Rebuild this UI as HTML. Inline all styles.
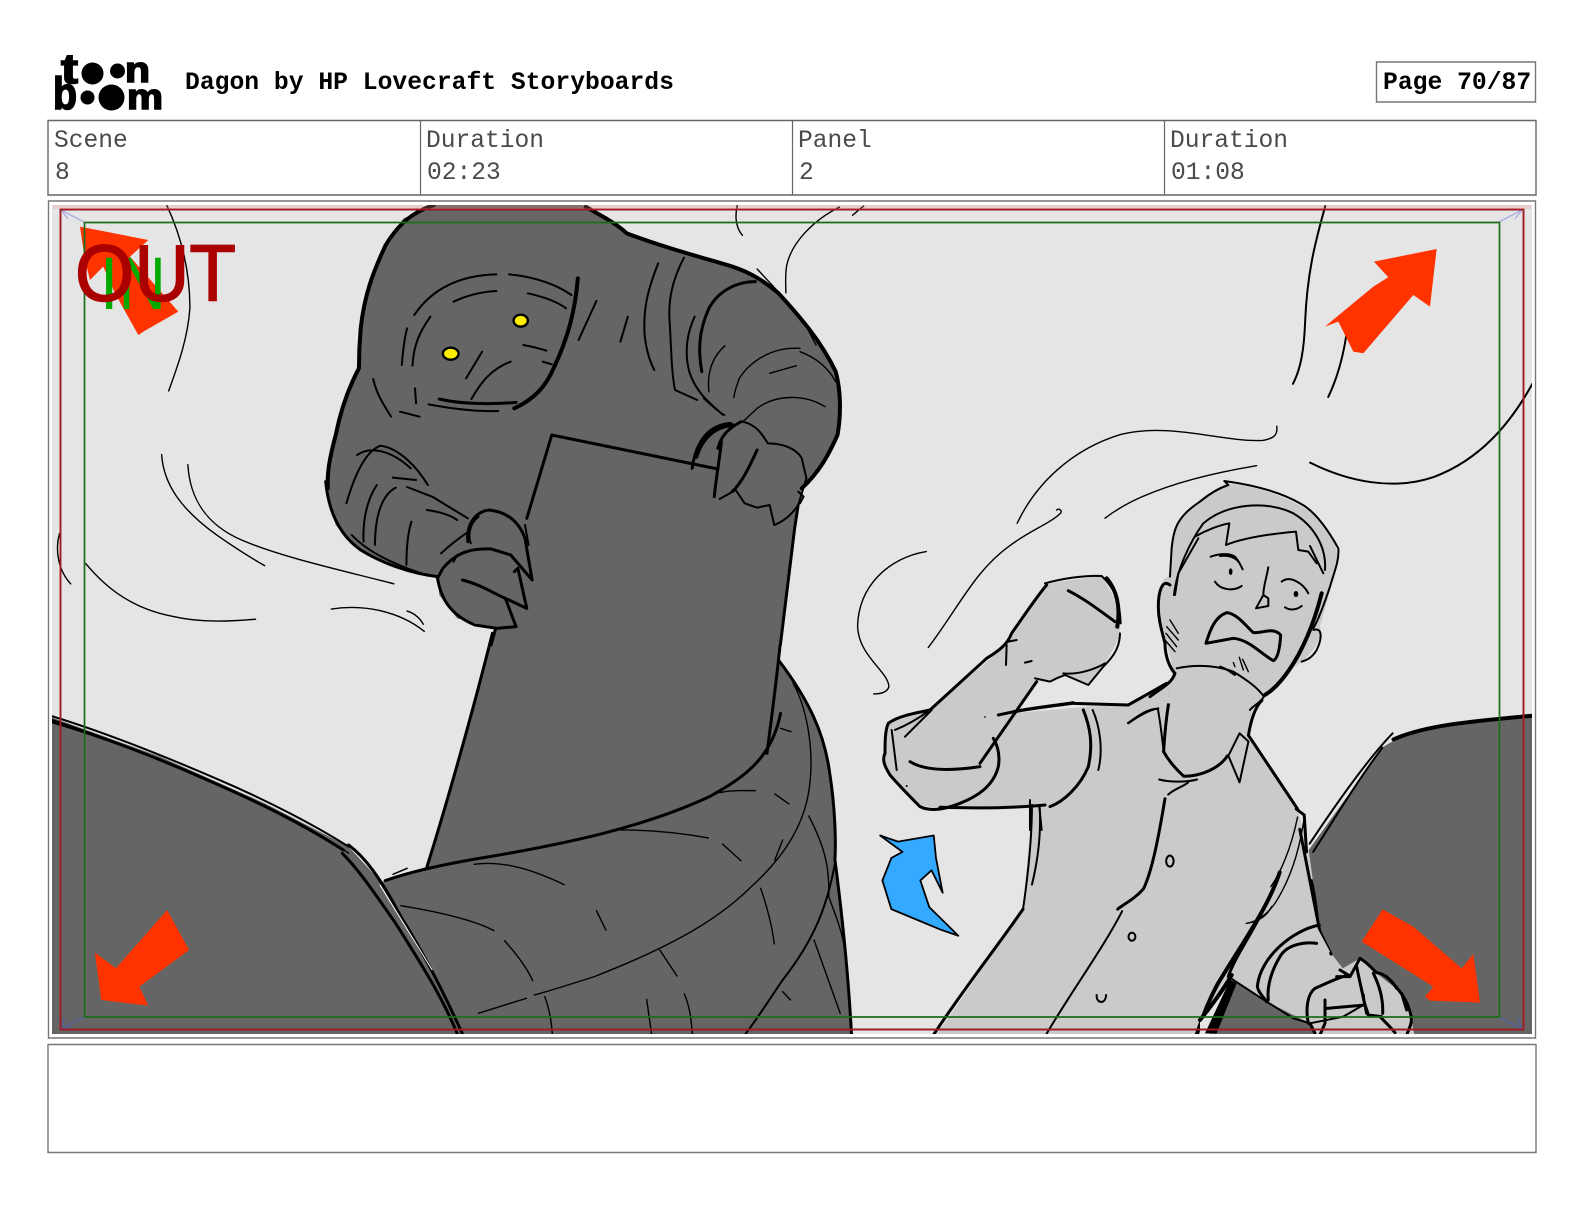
<!DOCTYPE html>
<html><head><meta charset="utf-8"><style>
html,body{margin:0;padding:0;background:#fff}
body{width:1584px;height:1224px;overflow:hidden;position:relative}
svg{position:absolute;left:0;top:0}
svg *{vector-effect:non-scaling-stroke}
.l{fill:none;stroke:#000;stroke-linecap:round;stroke-linejoin:round;stroke-width:2}
.t{stroke-width:1.4}.b{stroke-width:3}.x{stroke-width:4}
.d{fill:#656565}.m{fill:#cacaca}.r{fill:#ff3300}
text{font-family:"Liberation Mono",monospace}
.h{font-weight:bold;font-size:24.7px;fill:#000}
.c{font-size:24.6px;fill:#4a4a4a}
.g{font-family:"Liberation Sans",sans-serif;font-weight:bold;fill:#000;stroke:#000;stroke-width:1.6px}
</style></head><body>
<svg width="1584" height="1224" viewBox="0 0 1584 1224" xmlns="http://www.w3.org/2000/svg">
<rect width="1584" height="1224" fill="#fff"/>
<!-- logo -->
<g fill="#000">
<text class="g" x="61" y="83" font-size="42" textLength="17" lengthAdjust="spacingAndGlyphs" style="font-family:'Liberation Sans',sans-serif">t</text>
<circle cx="92.500" cy="73.500" r="11"/><circle cx="117.500" cy="71" r="7.500"/>
<text class="g" x="125" y="82" font-size="36" textLength="25" lengthAdjust="spacingAndGlyphs" style="font-family:'Liberation Sans',sans-serif">n</text>
<text class="g" x="53" y="109" font-size="45" textLength="24" lengthAdjust="spacingAndGlyphs" style="font-family:'Liberation Sans',sans-serif">b</text>
<circle cx="87.500" cy="97.500" r="7"/><circle cx="111.500" cy="97.500" r="13"/>
<text class="g" x="127" y="109" font-size="36" textLength="36" lengthAdjust="spacingAndGlyphs" style="font-family:'Liberation Sans',sans-serif">m</text>
</g>
<text class="h" x="185" y="89">Dagon by HP Lovecraft Storyboards</text>
<rect x="1376.500" y="62" width="159" height="40" fill="#fff" stroke="#777" stroke-width="1.400"/>
<text class="h" x="1383" y="89">Page 70/87</text>
<!-- table -->
<rect x="48" y="120.500" width="1488" height="74.500" fill="#fff" stroke="#666" stroke-width="1.400"/>
<path d="M420.500 120.500V195M792.500 120.500V195M1164.500 120.500V195" stroke="#666" stroke-width="1.200"/>
<text class="c" x="54" y="147">Scene</text><text class="c" x="55" y="179">8</text>
<text class="c" x="426" y="147">Duration</text><text class="c" x="427" y="179">02:23</text>
<text class="c" x="798" y="147">Panel</text><text class="c" x="799" y="179">2</text>
<text class="c" x="1170" y="147">Duration</text><text class="c" x="1171" y="179">01:08</text>
<!-- panel -->
<rect x="48.500" y="201" width="1487" height="837" fill="#fff" stroke="#777" stroke-width="1.400"/>
<rect x="48" y="1044.500" width="1488" height="108" fill="#fff" stroke="#777" stroke-width="1.400"/>
<clipPath id="c"><rect x="52" y="205" width="1480" height="829"/></clipPath>
<g clip-path="url(#c)">
<rect x="52" y="205" width="1480" height="829" fill="#e5e5e5"/>

<!-- background wisps (main view coords) -->
<g transform="scale(1.0101)">
<path class="l t" d="M165 203C180 235 188 270 188 305C186 335 176 362 167 387"/>
<path class="l t" d="M160 450C162 480 180 505 215 530C232 542 248 552 262 560"/>
<path class="l t" d="M186 460C188 495 205 520 240 535C280 552 340 565 390 578"/>
<path class="l t" d="M85 558C105 582 130 602 170 610C200 617 230 615 253 613"/>
<path class="l t" d="M328 603C360 598 395 605 420 625M403 605C410 607 416 612 419 618"/>
<path class="l t" d="M59 528C54 545 58 565 70 578"/>
<path class="l t" d="M730 203C727 215 729 226 735 233"/>
<path class="l t" d="M831 205C805 218 784 240 779 262C777 272 778 282 778 290M855 204L844 213"/>
<path class="l" d="M1312 204C1302 240 1294 270 1292 320C1291 345 1288 365 1280 380"/>
<path class="l" d="M1335 315C1332 345 1325 372 1315 393"/>
<path class="l" d="M1517 380C1495 420 1465 455 1420 472C1380 486 1335 477 1297 458"/>
<path class="l t" d="M1007 518C1025 480 1060 445 1110 430C1160 418 1210 438 1250 436C1262 434 1265 430 1264 422"/>
<path class="l t" d="M1094 513C1130 485 1190 470 1244 461"/>
<path class="l t" d="M919 641C950 600 965 565 1000 540C1020 525 1040 518 1050 508C1052 505 1048 503 1046 505"/>
<path class="l t" d="M917 546C880 552 850 580 849 620C850 650 880 665 880 680C878 686 870 687 865 687"/>
</g>

<!-- left rock -->
<g transform="translate(40 640) scale(.523 .3333)">
<path class="d" d="M22 232L230 350L430 490L590 620L660 740L700 860L760 1000L825 1195H20Z"/>
<path class="d" d="M655 725L740 680L865 0H1415L1412 60C1470 180 1500 280 1510 400C1520 500 1522 600 1520 660C1530 780 1545 980 1552 1195H815L760 1000L700 860Z"/>
<path class="l" d="M22 228C130 280 240 350 340 418C440 485 530 560 590 620"/>
<path class="l b" d="M22 245C120 290 220 350 320 420C420 488 500 550 580 630" />
<path class="l t" d="M22 238C130 295 230 355 330 425C420 490 510 550 590 640"/>
<path class="l b" d="M590 615C620 650 650 710 690 830C730 930 770 1050 810 1190"/>
<path class="l b" d="M578 640C610 690 640 760 680 850C720 950 770 1070 800 1190"/>
<path d="M650 735L750 990" stroke="#fff" stroke-width="1" fill="none"/>
<path class="l b" d="M660 722C700 700 760 675 860 650C1000 612 1150 565 1280 470C1350 410 1400 350 1416 220"/>
<path class="l b" d="M740 680C780 480 830 200 865 -20"/>
<path class="l b" d="M1390 340C1400 220 1410 100 1416 0"/>
<path class="l b" d="M1412 60C1470 180 1500 280 1510 400C1520 500 1522 600 1520 660C1530 780 1545 980 1552 1195"/>
<path class="l t" d="M1440 130C1465 200 1480 320 1472 430C1465 540 1430 640 1360 740C1290 850 1190 930 1060 1010C1000 1040 960 1060 945 1065M930 1075L838 1120"/>
<path class="l" d="M1520 670C1505 800 1480 900 1420 1020C1390 1090 1370 1140 1345 1190"/>
<path class="l t" d="M690 797C760 815 830 840 868 872M888 902C910 940 930 980 942 1022M830 673C890 660 950 695 1002 734M1110 570C1170 570 1230 580 1278 594M1305 612L1340 662M1300 458C1320 450 1345 452 1368 452M1405 462L1432 492M1064 812L1082 870M1185 930L1218 1008M1378 745C1390 800 1400 860 1404 912M1470 528C1500 620 1510 680 1508 770M1480 900L1530 1120M1508 770C1530 860 1540 900 1545 1020M965 1070C975 1110 978 1150 980 1190M1160 1078L1170 1190M1232 1062C1245 1110 1245 1150 1248 1190M1420 1055L1435 1080M1416 265L1436 275M1420 600L1405 660M675 703L702 685"/>
</g>

<!-- right rock -->
<g transform="translate(840 400) scale(.4464 .40894)">
<path class="d" d="M1050 1100L1215 850C1280 800 1400 785 1560 772V1570H820L880 1400Z"/>
<path class="l x" d="M1240 830C1310 795 1420 785 1550 772"/>
<path class="l" d="M1238 815C1180 880 1110 990 1052 1085"/>
<path class="l" d="M1215 850C1160 930 1110 1020 1060 1105"/>
</g>

<!-- monster upper -->
<g transform="translate(300 195) scale(.35714 .33333)">
<path class="d" d="M375 30H790L860 65L915 115C1000 150 1100 180 1180 205C1250 225 1290 250 1340 295C1400 365 1460 440 1500 530C1515 590 1515 660 1505 720C1480 780 1455 830 1405 880L1395 930L1385 1000L1345 1350H535L545 1300L440 1270L390 1200L385 1145L250 1110L160 1060L100 990L75 880L90 750L120 620L165 520L165 450L190 270L240 140L290 70Z"/>
<path class="l x" d="M375 30C320 50 280 80 240 150C205 230 180 300 170 400C165 460 165 500 165 520C140 570 115 640 100 720C85 780 75 830 78 880"/>
<path class="l x" d="M800 35C830 55 880 80 915 115C1000 150 1100 180 1180 205C1250 225 1290 250 1340 295C1400 365 1460 440 1500 530C1515 590 1515 660 1505 720C1480 780 1455 830 1405 880"/>
<path class="l b" d="M1395 930L1385 1000L1345 1350"/>
<path class="l b" d="M548 1300L535 1350"/>
<path class="l b" d="M72 860C80 950 110 1020 170 1065C230 1105 310 1135 385 1145"/>
<path class="l" d="M320 360C370 280 450 240 550 238M585 238C660 245 720 270 760 300"/>
<path class="l" d="M430 320C470 300 510 290 550 288M638 295C680 305 720 320 745 340"/>
<path class="l x" d="M778 250C770 350 750 430 710 520C690 570 660 610 600 640"/>
<path class="l b" d="M390 612C440 625 520 630 605 622"/>
<path class="l" d="M360 628C420 640 490 650 555 648"/>
<path class="l" d="M365 365C335 410 318 450 315 512M300 400C292 430 288 470 285 510M625 450C650 455 670 460 690 467M680 500L705 508M510 470L465 550M590 500C540 520 510 555 480 612M830 318L780 435M918 365L897 440M205 552C215 600 235 630 255 665M322 580L325 625M280 650L335 665M1003 205C975 280 960 340 965 420C970 470 980 500 992 525M1075 188C1045 250 1030 310 1035 380C1040 470 1040 530 1050 585L1112 615M1105 365C1085 410 1075 470 1090 530C1105 580 1130 610 1185 660"/>
<path class="l b" d="M1275 260C1220 260 1170 290 1145 340C1115 410 1115 470 1125 530"/>
<path class="l t" d="M1280 222L1365 320M1190 452C1150 490 1140 540 1145 590M1130 610C1150 630 1170 650 1190 660M1400 460C1320 455 1260 500 1230 550C1220 580 1215 600 1215 608M1315 535L1390 512M1400 470C1450 490 1480 520 1500 560M1470 635C1410 595 1330 600 1280 640C1260 660 1250 670 1240 680M1425 410L1445 450"/>
<path class="l" d="M1240 680C1280 690 1295 720 1310 745C1350 745 1390 760 1405 790L1418 850L1395 930C1370 970 1340 985 1328 990L1315 930L1280 938L1245 925L1220 885L1175 912"/>
<path class="l b" d="M1180 740C1175 790 1165 850 1160 905M1280 765C1260 810 1240 860 1210 890M1235 680C1200 700 1180 720 1170 760M1205 685C1150 690 1110 730 1098 820"/>
<path class="l x" d="M1210 690C1160 695 1125 730 1110 785"/>
<path class="l b" d="M705 720L1170 822"/>
<path class="l b" d="M705 720L635 970"/>
<path class="l" d="M1395 890L1410 905L1400 925"/>
<path class="l" d="M130 925C150 850 180 770 225 752C280 760 330 820 358 870M160 780C200 750 260 770 310 820M260 848L325 855M300 876L370 905L470 970M355 945C390 950 420 960 440 975M215 870C190 910 175 970 178 1040M268 878C230 900 210 960 210 1050M312 980C300 1020 298 1070 298 1110M145 1020C180 1060 240 1100 340 1135"/>
<path class="l b" d="M470 1040C465 990 490 950 530 945C570 950 610 970 630 1030L650 1155L590 1080L535 1062C480 1060 440 1070 400 1120L385 1150C395 1210 420 1260 490 1290L550 1300L605 1295L575 1210L635 1240L610 1120L600 1130M455 1155C510 1170 550 1200 575 1210"/>
<path class="l" d="M500 965C475 985 470 1020 478 1045M395 1075C420 1050 445 1030 465 1015M430 1100L440 1080M630 990L640 1050"/>
<ellipse cx="618" cy="377" rx="20" ry="18" fill="#ffee00" stroke="#000" stroke-width="2.400"/>
<ellipse cx="422" cy="476" rx="22" ry="18" fill="#ffee00" stroke="#000" stroke-width="2.400"/>
</g>

<!-- man torso fill -->
<g transform="translate(840 400) scale(.4464 .40894)">
<path class="m" d="M430 990L640 745L740 690L748 650L945 730L925 760L915 820L1025 1000L1050 1100L1075 1300L1098 1350L1138 1406L1200 1420L1275 1490L1290 1570H1040L1050 1530L875 1420L815 1570H205L410 1245L430 1000Z"/>
</g>

<!-- arm -->
<g transform="translate(880 570) scale(.3333)">
<path class="m" d="M10 560L20 460L150 420L380 225L500 40L665 18L720 110L720 200L670 290L625 345L550 315L520 330L470 335L400 430L620 410L745 405L860 340L880 335V780H450V715H180L110 705L30 620Z"/>
<path class="l" d="M495 40C550 25 620 15 665 18C700 50 720 90 722 160M720 190C720 240 690 270 670 290L625 345L555 315L530 325L510 335L465 325"/>
<path class="l x" d="M680 25C710 60 722 110 712 170"/>
<path class="l b" d="M565 62C620 90 670 130 705 155"/>
<path class="l b" d="M500 45C470 80 430 140 395 190C385 215 370 235 320 265L150 420C100 430 50 440 25 460C15 480 15 520 15 550C5 570 15 590 30 615C60 650 90 680 120 710C150 725 190 720 240 700C290 680 340 650 355 590C360 560 355 530 340 505"/>
<path class="l b" d="M470 335L300 580"/>
<path class="l" d="M155 420L75 500M150 420C110 450 70 470 45 480M35 480L50 600M380 225L378 285M385 215L410 210M435 278L455 273"/>
<path class="l b" d="M90 575C130 600 200 605 300 590"/>
<path class="l b" d="M180 712C280 715 390 715 495 705"/>
<path class="l" d="M450 690V780M478 708L485 780"/>
<path class="l b" d="M355 435C420 420 500 410 580 400L745 405L860 340M400 425C480 410 540 405 580 398"/>
<path class="l b" d="M610 420C630 470 640 520 625 590C600 650 550 695 510 710"/>
<path class="l" d="M638 420C660 470 670 540 655 600"/>
<path class="l" d="M745 460C780 435 810 420 835 415M550 310C590 315 640 300 675 280"/>
<circle cx="315" cy="441" r="2.500"/><circle cx="80" cy="648" r="3"/>
</g>

<!-- man torso lines -->
<g transform="translate(840 400) scale(.4464 .40894)">
<path class="l b" d="M410 1245C350 1340 270 1450 205 1560"/>
<path class="l" d="M430 990C430 1080 420 1170 410 1245M447 990C452 1070 440 1140 430 1185"/>
<path class="l b" d="M728 975C715 1060 700 1150 680 1195C660 1220 640 1230 622 1245"/>
<path class="l" d="M632 1250C590 1340 510 1460 460 1555"/>
<path class="l x" d="M985 1155C960 1240 900 1330 845 1430C820 1480 810 1520 798 1555"/>
<path class="l t" d="M1040 1020C1030 1100 1010 1170 975 1230C955 1260 935 1275 910 1280M1025 1020C1010 1100 985 1160 965 1190"/>
<path class="l b" d="M915 820L1025 1000M1022 1000L1040 1015L1045 1105M1030 1050C1045 1130 1060 1220 1075 1300L1100 1355"/>
<path class="l" d="M870 870L895 935L915 835L895 815L870 870"/>
<path class="l b" d="M945 735C930 750 920 785 915 820"/>
<path class="l b" d="M725 860C735 880 750 900 770 920C810 920 850 900 868 870"/>
<path class="l b" d="M745 690C735 740 728 800 725 860"/>
<path class="l" d="M715 928C740 935 775 935 800 928M735 965C750 950 770 945 780 935"/>
<path class="l" d="M645 790C670 770 690 755 712 755C718 790 722 830 725 860"/>
<path class="l" d="M742 1115A8 13 0 1 0 736 1140A8 13 0 1 0 742 1115ZM656 1303A7 9 0 1 0 652 1322A7 9 0 1 0 656 1303ZM575 1455C573 1475 595 1480 596 1455"/>
</g>

<!-- head -->
<g transform="translate(1120 470) scale(.3333)">
<path class="m" d="M160 180C200 110 270 60 320 40C420 50 520 85 590 140C640 190 660 240 650 290L600 470C610 490 590 540 545 575L510 600L430 680L390 720L140 700L160 600L130 480C110 420 110 360 130 330L155 310Z"/>
<path class="l" d="M155 235C160 180 170 140 240 95C270 70 295 55 325 45L313 33C400 45 480 65 540 100C590 125 630 190 655 235C658 270 645 300 630 350C610 410 595 450 580 475"/>
<path class="l" d="M162 375C170 300 210 215 250 160C320 100 440 90 520 130C580 165 620 230 615 300"/>
<path class="l" d="M225 200C260 180 300 165 328 160L318 225C380 200 470 190 528 185L535 240L565 245L590 280"/>
<path class="l" d="M155 235L150 320M235 205L175 310L165 375M570 228L610 310"/>
<path class="l b" d="M150 345C125 325 115 370 115 410C115 450 125 480 135 520C135 560 150 595 165 610C155 640 130 650 90 680"/>
<path class="l t" d="M150 450L175 490M140 470L175 510M138 490L170 530M135 510L165 545"/>
<path class="l" d="M580 480C610 470 605 510 590 540C575 565 560 570 545 575"/>
<path class="l x" d="M605 370C590 430 565 500 535 555C510 600 475 650 435 675"/>
<path class="l" d="M170 595C240 580 300 590 340 605C380 630 410 650 432 680M300 590C320 595 335 610 345 615"/>
<path class="l" d="M432 680C420 700 395 710 390 720"/>
<path class="l" d="M272 260C300 250 330 250 345 260C355 270 362 285 368 298M300 258C325 255 345 262 355 275"/>
<ellipse cx="332" cy="305" rx="5.500" ry="10" fill="#000"/>
<ellipse cx="528" cy="372" rx="7" ry="9" fill="#000"/>
<path class="l" d="M285 335C300 360 340 365 365 348"/>
<path class="l" d="M485 335C510 315 550 340 565 370"/>
<path class="l" d="M495 412C510 422 530 420 545 408"/>
<path class="l" d="M445 292C438 330 430 350 430 375L408 415L445 408L445 385L430 375"/>
<path class="l b" d="M258 520C270 480 285 440 320 428C350 430 380 470 400 488C430 490 460 470 482 495C480 530 475 565 460 572C420 550 390 510 340 505Z"/>
<path class="l t" d="M340 578L345 590M358 562L370 600M368 568L385 605"/>
</g>

<!-- hand -->
<g transform="translate(1200 880) scale(.3333)">
<path class="m" d="M330 320L420 270L480 235L530 280L600 335L640 420L610 460H580L520 410L370 420L345 460L330 440Z"/>
<path class="m" d="M90 295L175 120L350 140L390 215L330 320L330 430L200 365Z"/>
<path class="d" d="M90 295L200 365L330 430L345 462H60Z" />
<path d="M60 340L90 295L20 462H0V420Z" fill="#e5e5e5"/>
<path d="M90 300L110 310L50 460H15Z" fill="#000"/>
<path class="l b" d="M358 135C280 150 180 230 172 320C175 335 185 345 200 365"/>
<path class="l b" d="M350 190C310 185 260 195 240 230C215 270 200 320 205 360"/>
<path class="l" d="M85 290L200 365L280 415L330 430L430 410L490 375"/>
<path class="l b" d="M325 430C315 380 325 340 345 325C380 310 420 290 445 285L420 270M380 385L495 375M375 360V430L362 460M470 260C480 310 490 350 500 400M520 280C540 320 550 360 548 400M560 290C590 320 615 350 625 380C640 420 635 430 622 460M605 340L620 390M505 405L545 410M330 430L345 460"/>
<path class="l b" d="M410 290L450 290L480 235C505 250 520 270 530 278C550 280 575 300 590 325M490 345C490 370 500 385 505 405M540 410C560 430 575 445 585 458"/>
<path class="l x" d="M95 285C70 330 40 370 0 420"/>
<path class="l t" d="M140 130C175 125 200 110 215 80"/>
<path class="l b" d="M190 90C150 170 100 240 85 290"/>
<path class="l" d="M355 130C350 80 345 40 335 0"/>
</g>

<!-- blue arrow + red arrows -->
<g transform="translate(840 400) scale(.4464 .40894)">
<path d="M90 1065L130 1080L210 1065L215 1120L230 1205L205 1150L180 1175L200 1240L265 1310L225 1295L115 1245L95 1175L115 1120L140 1105Z" fill="#33aaff" stroke="#000" stroke-width="1.800" stroke-linejoin="round"/>
</g>
<g transform="translate(1200 50) scale(.3333)"><path class="r" d="M375 830L405 805L520 710L565 682L522 635L710 597L690 770L640 735L490 910L460 905L415 815Z"/></g>
<g transform="translate(1200 880) scale(.3333)"><path class="r" d="M548 88L640 140L785 265L820 222L840 368L690 362L675 350L700 320L485 185Z"/></g>
<g transform="translate(40 640) scale(.523 .3333)"><path class="r" d="M243 810L285 930L190 1040L207 1097L117 1080L105 938L145 985Z"/></g>
<g transform="translate(40 40) scale(.3333)"><path class="r" d="M120 560L325 600L270 650L415 815L310 875L295 885L225 760L190 680L150 720L135 660Z"/></g>

<!-- corner arrows and frames -->
<g fill="none" stroke="#aab0e4" stroke-width="1.300">
<path d="M84 222L61 210M61 210L72 210M61 210L68 219"/>
<path d="M1499 222L1522 210M1522 210L1511 210M1522 210L1515 219"/>
<path d="M84 1017L61 1029M61 1029L64 1018M61 1029L72 1028" stroke="#55609c"/>
<path d="M1499 1017L1522 1029M1522 1029L1511 1029M1522 1029L1518 1018" stroke="#55609c"/>
</g>
<rect x="84.500" y="222.500" width="1415" height="794.500" fill="none" stroke="#1a6e1a" stroke-width="1.700"/>
<rect x="60.500" y="209.500" width="1463" height="820" fill="none" stroke="#a01c24" stroke-width="1.900"/>
<rect x="52" y="205" width="1480" height="4" fill="#f09090" opacity=".25"/>
<text x="100" y="309" font-size="74" fill="#00aa00" textLength="66" lengthAdjust="spacingAndGlyphs" style="font-family:'Liberation Sans',sans-serif">IN</text>
<text x="75" y="300.500" font-size="80" fill="#aa0000" stroke="#aa0000" stroke-width="1.500" textLength="161" lengthAdjust="spacingAndGlyphs" style="font-family:'Liberation Sans',sans-serif">OUT</text>
</g>
</svg>
</body></html>
